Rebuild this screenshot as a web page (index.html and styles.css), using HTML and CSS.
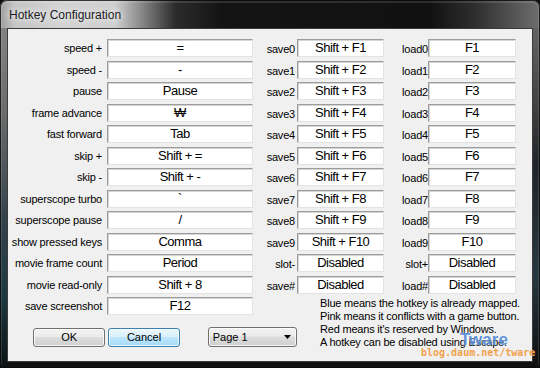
FILE: index.html
```html
<!DOCTYPE html>
<html>
<head>
<meta charset="utf-8">
<title>Hotkey Configuration</title>
<link rel="stylesheet" href="styles.css">
</head>
<body>
<div class="window">
  <div class="titlebar"><span class="title">Hotkey Configuration</span></div>
  <div class="client">
    <div class="grid">
      <div class="lbl">speed +</div><div class="key">=</div><div class="lbl mid">save0</div><div class="key">Shift + F1</div><div class="lbl right">load0</div><div class="key">F1</div>
      <div class="lbl">speed -</div><div class="key">-</div><div class="lbl mid">save1</div><div class="key">Shift + F2</div><div class="lbl right">load1</div><div class="key">F2</div>
      <div class="lbl">pause</div><div class="key">Pause</div><div class="lbl mid">save2</div><div class="key">Shift + F3</div><div class="lbl right">load2</div><div class="key">F3</div>
      <div class="lbl">frame advance</div><div class="key">₩</div><div class="lbl mid">save3</div><div class="key">Shift + F4</div><div class="lbl right">load3</div><div class="key">F4</div>
      <div class="lbl">fast forward</div><div class="key">Tab</div><div class="lbl mid">save4</div><div class="key">Shift + F5</div><div class="lbl right">load4</div><div class="key">F5</div>
      <div class="lbl">skip +</div><div class="key">Shift + =</div><div class="lbl mid">save5</div><div class="key">Shift + F6</div><div class="lbl right">load5</div><div class="key">F6</div>
      <div class="lbl">skip -</div><div class="key">Shift + -</div><div class="lbl mid">save6</div><div class="key">Shift + F7</div><div class="lbl right">load6</div><div class="key">F7</div>
      <div class="lbl">superscope turbo</div><div class="key">`</div><div class="lbl mid">save7</div><div class="key">Shift + F8</div><div class="lbl right">load7</div><div class="key">F8</div>
      <div class="lbl">superscope pause</div><div class="key">/</div><div class="lbl mid">save8</div><div class="key">Shift + F9</div><div class="lbl right">load8</div><div class="key">F9</div>
      <div class="lbl">show pressed keys</div><div class="key">Comma</div><div class="lbl mid">save9</div><div class="key">Shift + F10</div><div class="lbl right">load9</div><div class="key">F10</div>
      <div class="lbl">movie frame count</div><div class="key">Period</div><div class="lbl mid">slot-</div><div class="key">Disabled</div><div class="lbl right">slot+</div><div class="key">Disabled</div>
      <div class="lbl">movie read-only</div><div class="key">Shift + 8</div><div class="lbl mid">save#</div><div class="key">Disabled</div><div class="lbl right">load#</div><div class="key">Disabled</div>
      <div class="lbl">save screenshot</div><div class="key">F12</div>
      <div class="legend">
        <div>Blue means the hotkey is already mapped.</div>
        <div>Pink means it conflicts with a game button.</div>
        <div>Red means it's reserved by Windows.</div>
        <div>A hotkey can be disabled using Escape.</div>
      </div>
      <div class="actions">
        <div class="btn">OK</div>
        <div class="btn focus">Cancel</div>
        <div class="select"><span>Page 1</span><svg class="arrow" width="7" height="4" viewBox="0 0 7 4"><polygon points="0,0 7,0 3.5,4" fill="#000"/></svg></div>
      </div>
    </div>
  </div>
  <div class="wm-name">Tware</div>
  <div class="wm-url">blog.daum.net/tware</div>
</div>
</body>
</html>
```

FILE: styles.css
```css
* { box-sizing: border-box; }
html, body { margin: 0; padding: 0; }
body {
  width: 540px;
  height: 368px;
  overflow: hidden;
  background: #0c0c0c;
  font-family: "Liberation Sans", Arial, sans-serif;
  color: #000;
}
.window {
  position: relative;
  width: 540px;
  height: 368px;
  display: flex;
  flex-direction: column;
  padding: 0 7px 6px 7px;
  border-radius: 7px 7px 5px 5px;
  overflow: hidden;
  background:
    linear-gradient(to right, #9d9d9d 0, #c4c4c4 14px, #d3d3d3 60px, #cfcfcf 115px, #8c8c8c 140px, #2c2c2c 175px, #141414 220px, #111 430px, #2e2e2e 475px, #6e6e6e 540px) 0 0 / 100% 28px no-repeat,
    linear-gradient(to bottom, #8a8a8a 0, #6c6c6c 30%, #33414b 60%, #1d3a40 80%, #0b1214 100%) 0 0 / 8px 100% no-repeat,
    linear-gradient(to bottom, #6e6e6e 0, #505050 20%, #202428 45%, #283840 75%, #0e0e0e 100%) 100% 0 / 8px 100% no-repeat,
    #111;
  box-shadow: inset 0 0 0 1px rgba(0,0,0,.75), inset 0 1px 0 2px rgba(255,255,255,.12);
}
.titlebar {
  height: 28px;
  display: flex;
  align-items: center;
  padding: 2px 0 0 2px;
}
.title {
  font-size: 12px;
  line-height: 14px;
  color: #1b1b24;
  text-shadow: 0 0 6px rgba(255,255,255,.9), 0 0 10px rgba(255,255,255,.7);
}
.client {
  flex: 1;
  background: #f0f0f0;
  border: 1px solid #3c3c3c;
}
.grid {
  display: grid;
  grid-template-columns: 99px 146px 44px 87px 44px 88px;
  grid-template-rows: repeat(13, 21.5px) auto;
  padding-top: 10px;
}
.lbl {
  height: 18px;
  font-size: 11px;
  line-height: 18px;
  letter-spacing: -0.2px;
  text-align: right;
  padding-right: 5px;
  white-space: nowrap;
}
.lbl.mid {
  padding-right: 2px;
  padding-top: 1px;
}
.lbl.right {
  padding-right: 0;
  padding-top: 1px;
}
.key {
  height: 18px;
  background: #fff;
  border: 1px solid;
  border-color: #9c9c9c #e3e3e3 #e3e3e3 #9c9c9c;
  box-shadow: inset 1px 1px 0 #d5d5d5;
  font-size: 13px;
  line-height: 15px;
  letter-spacing: -0.5px;
  text-align: center;
  white-space: nowrap;
}
.legend {
  grid-column: 4 / 7;
  grid-row: 13 / 15;
  padding-left: 23px;
  font-size: 11px;
  line-height: 13px;
  letter-spacing: -0.2px;
  white-space: nowrap;
}
.actions {
  grid-column: 1 / 4;
  grid-row: 14;
  align-self: start;
  display: flex;
  align-items: center;
  padding-left: 25px;
  margin-top: 8.5px;
}
.btn {
  width: 73px;
  height: 19px;
  display: flex;
  align-items: center;
  justify-content: center;
  border: 1px solid #707070;
  border-radius: 3px;
  background: linear-gradient(#f2f2f2 0, #ebebeb 45%, #dddddd 50%, #cfcfcf 100%);
  box-shadow: inset 0 0 0 1px rgba(255,255,255,.75);
  font-size: 11px;
}
.btn.focus {
  width: 72px;
  margin-left: 3px;
  border-color: #3c7fb1;
  background: linear-gradient(#eaf6fd 0, #d9f0fc 45%, #bee6fd 50%, #a7d9f5 100%);
}
.select {
  width: 90px;
  height: 20px;
  margin-left: 28px;
  display: flex;
  align-items: center;
  justify-content: space-between;
  padding: 0 5px 0 4px;
  border: 1px solid #707070;
  border-radius: 3px;
  background: linear-gradient(#f2f2f2 0, #ebebeb 45%, #dddddd 50%, #cfcfcf 100%);
  box-shadow: inset 0 0 0 1px rgba(255,255,255,.75);
  font-size: 11px;
}
.arrow { display: block; }
.wm-name {
  position: absolute;
  left: 460px;
  top: 331px;
  font-size: 17px;
  line-height: 17px;
  font-weight: bold;
  color: rgba(70, 130, 210, .85);
  text-shadow: 0 0 2px rgba(255,255,255,.6);
}
.wm-url {
  position: absolute;
  left: 421px;
  top: 348px;
  font-family: "DejaVu Sans Mono", "Liberation Mono", monospace;
  font-size: 10px;
  line-height: 10px;
  font-weight: bold;
  color: #f2a24f;
}
```
